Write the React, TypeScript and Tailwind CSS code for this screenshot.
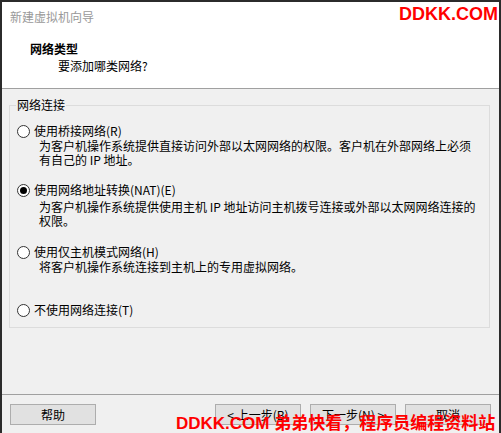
import React from "react";

function Radio({ checked }: { checked?: boolean }) {
  return (
    <span className="flex h-[13px] w-[13px] shrink-0 items-center justify-center rounded-full border border-[#333333] bg-white">
      {checked && <span className="block h-[7px] w-[7px] rounded-full bg-[#000000]" />}
    </span>
  );
}

function Btn({ children }: { children: React.ReactNode }) {
  return (
    <div className="flex h-[21px] w-[86px] items-center justify-center border border-[#adadad] bg-[#e1e1e1] text-[12px] leading-[16px] text-black">
      {children}
    </div>
  );
}

export default function App() {
  return (
    <div
      className="relative h-[433px] w-[501px] overflow-hidden bg-[#2b2b2b] px-[2px] pt-[2px]"
      style={{ fontFamily: '"Noto Sans CJK SC", "Noto Sans", sans-serif' }}
    >
      <div className="flex h-full flex-col bg-[#f0f0f0]">
        {/* header */}
        <div className="relative h-[87px] shrink-0 border-b border-[#a0a0a0] bg-white">
          <div className="ml-[8px] mt-[7px] text-[12px] leading-[16px] text-[#999999]">新建虚拟机向导</div>
          <div className="ml-[28px] mt-[16px] text-[12px] font-bold leading-[16px] text-black">网络类型</div>
          <div className="ml-[56px] mt-[1px] text-[12px] leading-[16px] text-black">要添加哪类网络?</div>
          <div
            className="absolute right-[1px] top-[1px] text-[18px] font-bold leading-[22px] text-[#ff0000]"
            style={{ fontFamily: '"Liberation Sans", sans-serif' }}
          >
            DDKK.COM
          </div>
        </div>

        {/* body */}
        <div className="flex flex-1 flex-col">
          <div className="relative ml-[7px] mt-[16px] h-[223px] w-[481px] border border-[#dcdcdc]">
            <div className="absolute -top-[9px] left-[6px] bg-[#f0f0f0] px-[1px] text-[12px] leading-[16px] text-black">
              网络连接
            </div>
            <div className="flex flex-col pl-[7px] pt-[17px] text-[12px] text-black">
              <div className="flex h-[16px] items-center gap-[4px]">
                <Radio />
                <span className="leading-[16px]">使用桥接网络(R)</span>
              </div>
              <div className="ml-[22px] leading-[14px]">
                <div>为客户机操作系统提供直接访问外部以太网网络的权限。客户机在外部网络上必须</div>
                <div>有自己的 IP 地址。</div>
              </div>

              <div className="mt-[15px] flex h-[16px] items-center gap-[4px]">
                <Radio checked />
                <span className="leading-[16px]">使用网络地址转换(NAT)(E)</span>
              </div>
              <div className="ml-[22px] mt-[2px] leading-[14px]">
                <div>为客户机操作系统提供使用主机 IP 地址访问主机拨号连接或外部以太网网络连接的</div>
                <div>权限。</div>
              </div>

              <div className="mt-[16px] flex h-[16px] items-center gap-[4px]">
                <Radio />
                <span className="leading-[16px]">使用仅主机模式网络(H)</span>
              </div>
              <div className="ml-[22px] leading-[14px]">
                <div>将客户机操作系统连接到主机上的专用虚拟网络。</div>
              </div>

              <div className="mt-[28px] flex h-[16px] items-center gap-[4px]">
                <Radio />
                <span className="leading-[16px]">不使用网络连接(T)</span>
              </div>
            </div>
          </div>

          <div className="flex-1" />

          <div className="h-0 border-t border-[#a0a0a0]" />
          <div className="flex h-[38px] items-start pl-[8px] pr-[8px] pt-[9px]">
            <Btn>帮助</Btn>
            <div className="flex-1" />
            <div className="flex gap-[9px]">
              <Btn>&lt; 上一步(B)</Btn>
              <Btn>下一步(N) &gt;</Btn>
              <Btn>取消</Btn>
            </div>
          </div>
        </div>
      </div>

      <div
        className="absolute bottom-[-1px] left-[176px] whitespace-nowrap text-[17px] font-bold leading-[21px] text-[#ff0000]"
        style={{ fontFamily: '"Liberation Sans", "Noto Sans CJK SC", sans-serif' }}
      >
        DDKK.COM 弟弟快看，程序员编程资料站
      </div>
    </div>
  );
}
